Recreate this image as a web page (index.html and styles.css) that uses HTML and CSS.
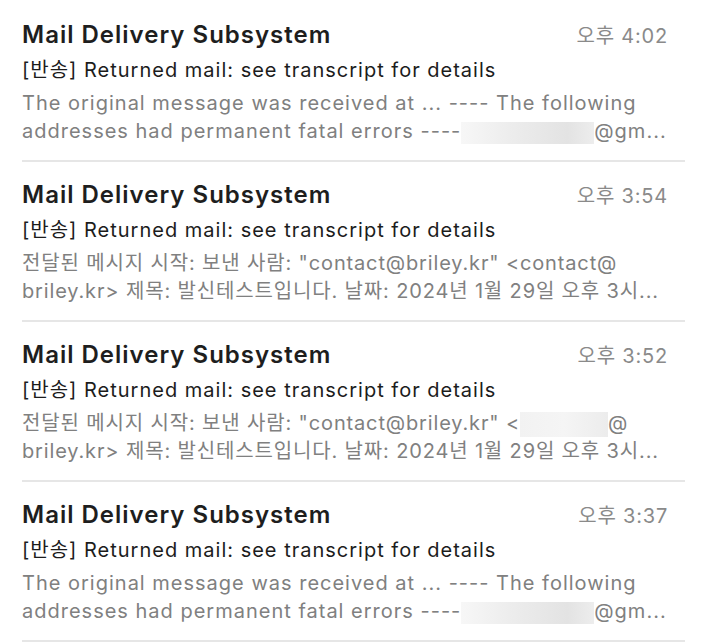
FILE: index.html
```html
<!DOCTYPE html>
<html lang="ko">
<head>
<meta charset="utf-8">
<link rel="stylesheet" href="styles.css">
</head>
<body>
<div class="list">
  <div class="item">
    <div class="head"><span class="sender">Mail Delivery Subsystem</span><span class="time">오후 4:02</span></div>
    <div class="subject">[반송] Returned mail: see transcript for details</div>
    <div class="preview">The original message was received at ... ---- The following<br>addresses had permanent fatal errors ----<span class="blur b1"></span>@gm...</div>
  </div>
  <div class="item">
    <div class="head"><span class="sender">Mail Delivery Subsystem</span><span class="time">오후 3:54</span></div>
    <div class="subject">[반송] Returned mail: see transcript for details</div>
    <div class="preview ko">전달된 메시지 시작: 보낸 사람: "contact@briley.kr" &lt;contact@<br>briley.kr&gt; 제목: 발신테스트입니다. 날짜: 2024년 1월 29일 오후 3시...</div>
  </div>
  <div class="item">
    <div class="head"><span class="sender">Mail Delivery Subsystem</span><span class="time">오후 3:52</span></div>
    <div class="subject">[반송] Returned mail: see transcript for details</div>
    <div class="preview ko">전달된 메시지 시작: 보낸 사람: "contact@briley.kr" &lt;<span class="blur b2"></span>@<br>briley.kr&gt; 제목: 발신테스트입니다. 날짜: 2024년 1월 29일 오후 3시...</div>
  </div>
  <div class="item">
    <div class="head"><span class="sender">Mail Delivery Subsystem</span><span class="time">오후 3:37</span></div>
    <div class="subject">[반송] Returned mail: see transcript for details</div>
    <div class="preview">The original message was received at ... ---- The following<br>addresses had permanent fatal errors ----<span class="blur b1"></span>@gm...</div>
  </div>
</div>
</body>
</html>
```

FILE: styles.css
```css
html, body {
  margin: 0;
  padding: 0;
  background: #ffffff;
}
body {
  font-family: Inter, "Noto Sans CJK KR", sans-serif;
  -webkit-font-smoothing: antialiased;
}
.list {
  padding: 2px 29px 0 22px;
}
.item {
  border-bottom: 2px solid #e6e6e6;
  padding-top: 18px;
  height: 140px;
}
.head {
  display: flex;
  justify-content: space-between;
  align-items: baseline;
  height: 30px;
  line-height: 30px;
}
.sender {
  font-size: 24px;
  font-weight: 600;
  letter-spacing: 1px;
  color: #1e1e1e;
}
.time {
  font-size: 20px;
  letter-spacing: 0.8px;
  color: #8a8a8a;
  margin-right: 17px;
}
.subject {
  margin-top: 5px;
  font-size: 20px;
  line-height: 30px;
  letter-spacing: 1px;
  color: #1c1c1c;
}
.preview {
  margin-top: 4px;
  font-size: 20px;
  line-height: 28px;
  letter-spacing: 1px;
  color: #808080;
}
.preview.ko {
  letter-spacing: 0.85px;
}
.blur {
  display: inline-block;
  vertical-align: middle;
  height: 22px;
  background: linear-gradient(90deg, #f7f7f7 0%, #ececec 40%, #e3e3e3 80%, #ededed 100%);
}
.b1 { width: 133px; }
.b2 { width: 88px; height: 25px; background: linear-gradient(90deg, #f2f2f2 0%, #f5f5f5 50%, #ececec 100%); }
```
